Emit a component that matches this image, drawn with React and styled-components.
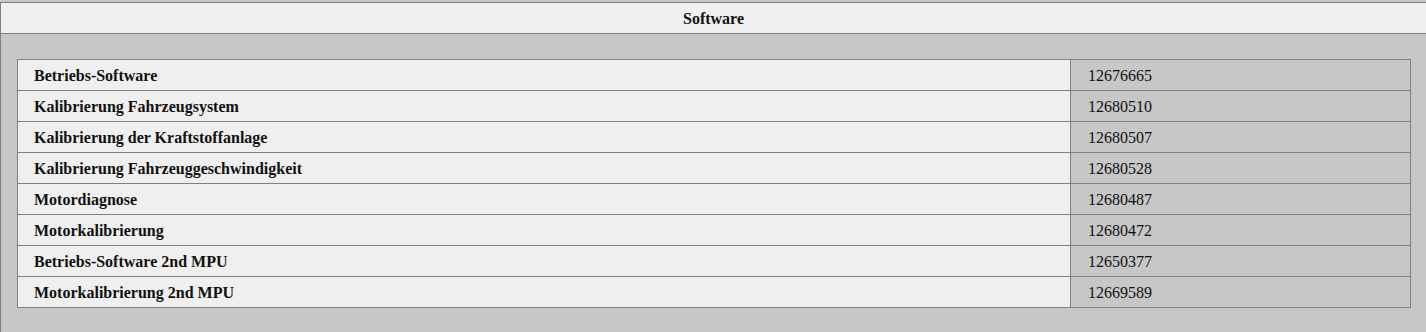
import React from "react"
import styled, { createGlobalStyle } from "styled-components"

const GlobalStyle = createGlobalStyle`
  html, body {
    margin: 0;
    padding: 0;
    background: #c7c7c7;
    overflow: hidden;
  }
  body {
    font-family: "Liberation Serif", "Times New Roman", serif;
    color: #111;
  }
`

const Panel = styled.section`
  margin-top: 2px;
  border-top: 1px solid #808080;
  border-left: 1px solid #808080;
  background: #c7c7c7;
`

const Header = styled.div`
  height: 30px;
  line-height: 31px;
  text-align: center;
  font-size: 16px;
  font-weight: bold;
  background: #efefef;
  border-bottom: 1px solid #808080;
`

const Body = styled.div`
  padding: 25px 15px 25px 16px;
`

const Table = styled.table`
  width: 100%;
  border-collapse: collapse;
  font-size: 16px;
`

const Cell = styled.td`
  height: 29px;
  padding: 1px 16px 0;
  border: 1px solid #808080;
  vertical-align: middle;
  background: ${(p) => (p.value ? "#c7c7c7" : "#efefef")};
  font-weight: ${(p) => (p.value ? "normal" : "bold")};
  width: ${(p) => (p.value ? "306px" : "auto")};
  padding-left: ${(p) => (p.value ? "17px" : "16px")};
`

const rows = [
  ["Betriebs-Software", "12676665"],
  ["Kalibrierung Fahrzeugsystem", "12680510"],
  ["Kalibrierung der Kraftstoffanlage", "12680507"],
  ["Kalibrierung Fahrzeuggeschwindigkeit", "12680528"],
  ["Motordiagnose", "12680487"],
  ["Motorkalibrierung", "12680472"],
  ["Betriebs-Software 2nd MPU", "12650377"],
  ["Motorkalibrierung 2nd MPU", "12669589"],
]

export default function App() {
  return (
    <>
      <GlobalStyle />
      <Panel>
        <Header>Software</Header>
        <Body>
          <Table>
            <tbody>
              {rows.map(([name, num]) => (
                <tr key={name}>
                  <Cell>{name}</Cell>
                  <Cell value>{num}</Cell>
                </tr>
              ))}
            </tbody>
          </Table>
        </Body>
      </Panel>
    </>
  )
}
